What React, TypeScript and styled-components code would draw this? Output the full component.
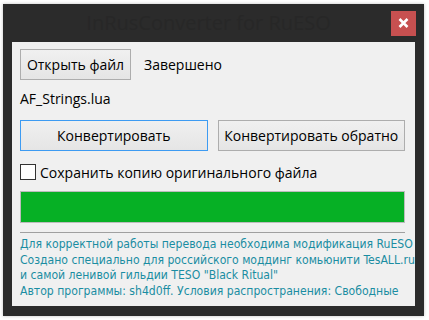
import React from "react";
import styled, { createGlobalStyle } from "styled-components";

const Global = createGlobalStyle`
  html, body { margin: 0; padding: 0; background: #ffffff; }
  body { width: 429px; height: 320px; overflow: hidden; }
`;

const Frame = styled.div`
  margin: 4px 0 0 3px;
  width: 421px;
  height: 312px;
  background: #2b2b2b;
  display: flex;
  flex-direction: column;
  box-sizing: border-box;
  padding: 0 9px 10px 9px;
  box-shadow: 0 0 3px rgba(0,0,0,0.25);
`;

const TitleBar = styled.div`
  height: 38px;
  display: flex;
  align-items: center;
`;

const Title = styled.div`
  flex: 1;
  text-align: center;
  font-family: "Open Sans", "Noto Sans", sans-serif;
  font-size: 20px;
  color: #272727;
  padding-left: 14px;
  margin-top: -1px;
`;

const CloseButton = styled.div`
  width: 25px;
  height: 25px;
  background: #c75050;
  margin-right: -1px;
  display: flex;
  align-items: center;
  justify-content: center;
`;

const Client = styled.div`
  flex: 1;
  background: #f0f0f0;
  padding: 7px 10px 0 8px;
  display: flex;
  flex-direction: column;
  font-family: "Open Sans", "Noto Sans", sans-serif;
  font-size: 14px;
  color: #000;
`;

const Row = styled.div`
  display: flex;
  align-items: center;
`;

const Button = styled.div<{ $w: number; $focused?: boolean }>`
  box-sizing: border-box;
  width: ${(p) => p.$w}px;
  height: 31px;
  border: 1px solid ${(p) => (p.$focused ? "#3d9bf2" : "#adadad")};
  background: linear-gradient(#f0f0f0, #e5e5e5);
  display: flex;
  align-items: center;
  justify-content: center;
`;

const Status = styled.span`
  margin-left: 13px;
`;

const FileName = styled.div`
  margin-top: 9px;
  height: 20px;
  line-height: 20px;
`;

const ButtonsRow = styled(Row)`
  margin-top: 11px;
  gap: 10px;
`;

const CheckRow = styled(Row)`
  margin-top: 13px;
  height: 16px;
`;

const Box = styled.div`
  width: 16px;
  height: 16px;
  box-sizing: border-box;
  border: 1px solid #333333;
  background: #ffffff;
  margin-right: 4px;
`;

const Progress = styled.div`
  margin-top: 11px;
  height: 32px;
  box-sizing: border-box;
  border: 1px solid #bcbcbc;
  background: #e6e6e6;
  display: flex;
`;

const Fill = styled.div`
  flex: 1;
  background: #06b025;
`;

const Separator = styled.div`
  margin-top: 9px;
  height: 1px;
  background: #a0a0a0;
`;

const Info = styled.div`
  margin-top: 4px;
  font-family: "DejaVu Sans Condensed", "DejaVu Sans", sans-serif;
  font-size: 12.1px;
  line-height: 15.5px;
  color: #1a8da2;
  white-space: nowrap;
`;

export default function App() {
  return (
    <>
      <Global />
      <Frame>
        <TitleBar>
          <Title>InRusConverter for RuESO</Title>
          <CloseButton>
            <svg width="11" height="10" viewBox="0 0 11 10">
              <path d="M1.5 1 L9.5 9 M9.5 1 L1.5 9" stroke="#ffffff" strokeWidth="2.6" />
            </svg>
          </CloseButton>
        </TitleBar>
        <Client>
          <Row>
            <Button $w={111}>Открыть файл</Button>
            <Status>Завершено</Status>
          </Row>
          <FileName>AF_Strings.lua</FileName>
          <ButtonsRow>
            <Button $w={188} $focused>Конвертировать</Button>
            <Button $w={188}>Конвертировать обратно</Button>
          </ButtonsRow>
          <CheckRow>
            <Box />
            <span>Сохранить копию оригинального файла</span>
          </CheckRow>
          <Progress>
            <Fill />
          </Progress>
          <Separator />
          <Info>
            Для корректной работы перевода необходима модификация RuESO
            <br />
            Создано специально для российского моддинг комьюнити TesALL.ru
            <br />
            и самой ленивой гильдии TESO "Black Ritual"
            <br />
            Автор программы: sh4d0ff. Условия распространения: Свободные
          </Info>
        </Client>
      </Frame>
    </>
  );
}
